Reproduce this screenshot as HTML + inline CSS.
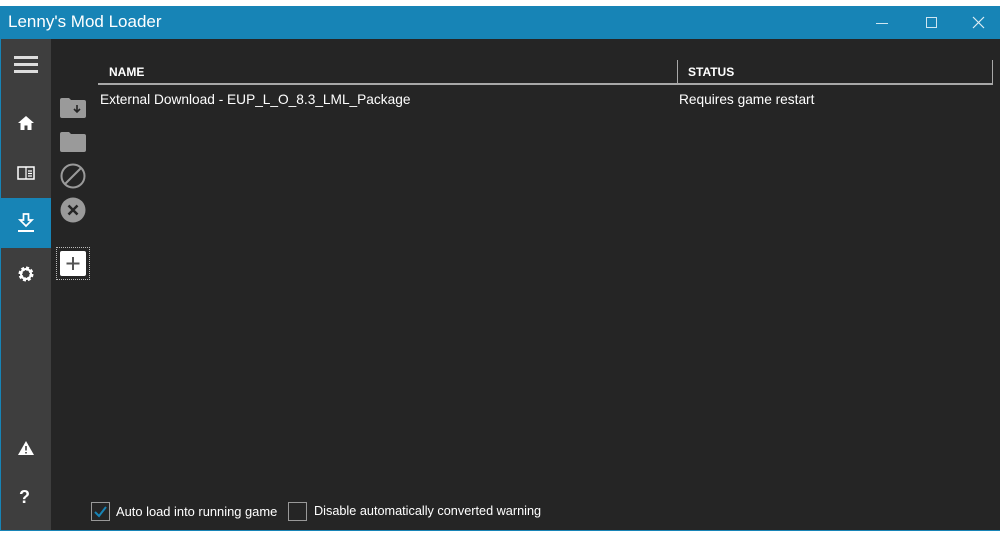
<!DOCTYPE html><html><head><style>
*{margin:0;padding:0;box-sizing:border-box}
body{width:1000px;height:533px;background:#fff;position:relative;overflow:hidden;font-family:"Liberation Sans",sans-serif}
.a{position:absolute}
</style></head><body>
<div class="a" style="left:0;top:6px;width:1000px;height:33px;background:#1784b6"></div>
<div class="a" style="left:8px;top:12px;color:#fff;font-size:17px;font-weight:300">Lenny's Mod Loader</div>
<div class="a" style="left:876px;top:23px;width:12px;height:1px;background:#cfe6f1"></div>
<div class="a" style="left:926px;top:17px;width:11px;height:11px;border:1px solid #cfe6f1"></div>
<svg class="a" style="left:972px;top:16px" width="13" height="13"><path d="M1 1L12 12M12 1L1 12" stroke="#e0eef5" stroke-width="1.2"/></svg>
<div class="a" style="left:0;top:39px;width:1000px;height:492px;background:#252525;border-left:1px solid #1784b6;border-bottom:1px solid #1784b6"></div>
<div class="a" style="left:1px;top:39px;width:50px;height:491px;background:#3e3e3e"></div>
<div class="a" style="left:1px;top:198px;width:50px;height:50px;background:#1784b6"></div>
<div class="a" style="left:14px;top:56px;width:24px;height:3px;background:#ddd;box-shadow:0 7px 0 #ddd,0 14px 0 #ddd"></div>
<svg class="a" style="left:17px;top:115px" width="18" height="16"><path d="M9 1L1 8H3.5V15H7.5V10.5H10.5V15H14.5V8H17Z" fill="#fff"/></svg>
<svg class="a" style="left:17px;top:166px" width="18" height="14"><rect x="1" y="1" width="16" height="12" fill="none" stroke="#fff" stroke-width="1.5"/><path d="M9 1V13M11 5H15M11 7.5H15M11 10H15" stroke="#fff" stroke-width="1.2"/></svg>
<svg class="a" style="left:17px;top:213px" width="18" height="20"><path d="M6.5 1H11.5V7H15L9 13L3 7H6.5Z" fill="none" stroke="#fff" stroke-width="1.7"/><rect x="1" y="17" width="16" height="2" fill="#fff"/></svg>
<svg class="a" style="left:17px;top:265px" width="18" height="18"><circle cx="9" cy="9" r="5.5" fill="none" stroke="#fff" stroke-width="4" stroke-dasharray="2.6 1.7"/><circle cx="9" cy="9" r="5" fill="none" stroke="#fff" stroke-width="2"/></svg>
<svg class="a" style="left:17px;top:440px" width="18" height="16"><path d="M9 1L17 15H1Z" fill="#fff"/><path d="M9 6V10.5M9 12V13.5" stroke="#3e3e3e" stroke-width="1.6"/></svg>
<div class="a" style="left:19px;top:487px;color:#fff;font-size:18px;font-weight:bold">?</div>
<svg class="a" style="left:60px;top:96px" width="27" height="23"><path d="M2 2H9L11 4H24Q26 4 26 6V20Q26 22 24 22H2Q0 22 0 20V4Q0 2 2 2Z" fill="#9a9a9a"/><path d="M17 9V16M14 13L17 16L20 13" stroke="#252525" stroke-width="1.6" fill="none"/></svg>
<svg class="a" style="left:60px;top:130px" width="27" height="23"><path d="M2 2H9L11 4H24Q26 4 26 6V20Q26 22 24 22H2Q0 22 0 20V4Q0 2 2 2Z" fill="#9a9a9a"/></svg>
<svg class="a" style="left:59px;top:162px" width="28" height="28"><circle cx="14" cy="14" r="11.5" fill="none" stroke="#9a9a9a" stroke-width="2"/><path d="M6 22L22 6" stroke="#9a9a9a" stroke-width="2"/></svg>
<svg class="a" style="left:59px;top:196px" width="28" height="28"><circle cx="14" cy="14" r="12.5" fill="#9a9a9a"/><path d="M9.5 9.5L18.5 18.5M18.5 9.5L9.5 18.5" stroke="#252525" stroke-width="2.5"/></svg>
<div class="a" style="left:56px;top:247px;width:34px;height:33px;border:1px dotted #bbb"></div>
<div class="a" style="left:60px;top:251px;width:26px;height:25px;background:#fff;border-radius:2px"></div>
<svg class="a" style="left:60px;top:251px" width="26" height="25"><path d="M13 6V19M6.5 12.5H19.5" stroke="#555" stroke-width="2"/></svg>
<div class="a" style="left:98px;top:83px;width:895px;height:2px;background:#a8a8a8"></div>
<div class="a" style="left:677px;top:60px;width:1px;height:24px;background:#a8a8a8"></div>
<div class="a" style="left:992px;top:60px;width:1px;height:24px;background:#a8a8a8"></div>
<div class="a" style="left:109px;top:65px;color:#fff;font-size:12px;font-weight:bold">NAME</div>
<div class="a" style="left:688px;top:65px;color:#fff;font-size:12px;font-weight:bold">STATUS</div>
<div class="a" style="left:100px;top:92px;color:#fff;font-size:13.7px">External Download - EUP_L_O_8.3_LML_Package</div>
<div class="a" style="left:679px;top:92px;color:#fff;font-size:13.7px">Requires game restart</div>
<div class="a" style="left:91px;top:502px;width:19px;height:19px;border:1px solid #999"></div>
<svg class="a" style="left:91px;top:502px" width="19" height="19"><path d="M4 10L8 14L15 5" stroke="#1784b6" stroke-width="2" fill="none"/></svg>
<div class="a" style="left:116px;top:504px;color:#fff;font-size:12.9px">Auto load into running game</div>
<div class="a" style="left:288px;top:502px;width:19px;height:19px;border:1px solid #999"></div>
<div class="a" style="left:314px;top:504px;color:#fff;font-size:12.7px">Disable automatically converted warning</div>
</body></html>
